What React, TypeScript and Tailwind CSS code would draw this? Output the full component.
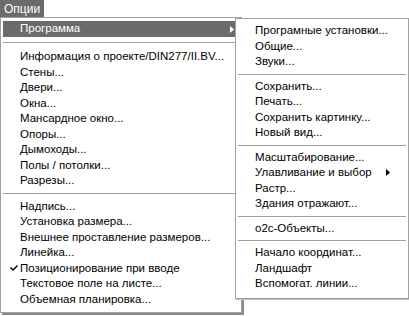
import React from 'react';

type Item = { label: string; sep?: 'a' | 'b' | 'c'; check?: boolean; sub?: boolean };

const mainItems: Item[] = [
  { label: 'sep', sep: 'a' },
  { label: 'Информация о проекте/DIN277/II.BV...' },
  { label: 'Стены...' },
  { label: 'Двери...' },
  { label: 'Окна...' },
  { label: 'Мансардное окно...' },
  { label: 'Опоры...' },
  { label: 'Дымоходы...' },
  { label: 'Полы / потолки...' },
  { label: 'Разрезы...' },
  { label: 'sep', sep: 'b' },
  { label: 'Надпись...' },
  { label: 'Установка размера...' },
  { label: 'Внешнее проставление размеров...' },
  { label: 'Линейка...' },
  { label: 'Позиционирование при вводе', check: true },
  { label: 'Текстовое поле на листе...' },
  { label: 'Объемная планировка...' },
];

const subItems: Item[] = [
  { label: 'Програмные установки...' },
  { label: 'Общие...' },
  { label: 'Звуки...' },
  { label: 'sep', sep: 'c' },
  { label: 'Сохранить...' },
  { label: 'Печать...' },
  { label: 'Сохранить картинку...' },
  { label: 'Новый вид...' },
  { label: 'sep', sep: 'c' },
  { label: 'Масштабирование...' },
  { label: 'Улавливание и выбор', sub: true },
  { label: 'Растр...' },
  { label: 'Здания отражают...' },
  { label: 'sep', sep: 'c' },
  { label: 'o2c-Объекты...' },
  { label: 'sep', sep: 'c' },
  { label: 'Начало координат...' },
  { label: 'Ландшафт' },
  { label: 'Вспомогат. линии...' },
];

function Arrow({ color }: { color: string }) {
  return (
    <svg width="4" height="7" viewBox="0 0 4 7" className="shrink-0">
      <path d="M0 0 L4 3.5 L0 7 Z" fill={color} />
    </svg>
  );
}

function Check() {
  return (
    <svg width="8" height="7" viewBox="0 0 8 7">
      <path d="M0 3 L1 2 L3 4 L7 0 L8 1 L3 6 Z" fill="#000" />
    </svg>
  );
}

function MenuRow({ item }: { item: Item }) {
  if (item.sep === 'a') {
    return (
      <div className="h-[12px] pt-[5px]">
        <div className="h-px w-full bg-[#a0a0a0]" />
      </div>
    );
  }
  if (item.sep) {
    return (
      <div className={(item.sep === 'c' ? 'h-[9px]' : 'h-[10px]') + ' flex items-center'}>
        <div className="h-px w-full bg-[#a0a0a0]" />
      </div>
    );
  }
  return (
    <div className="h-[15.5px] flex items-center">
      <div className="w-[17px] flex items-center justify-center pl-[4px]">
        {item.check && <Check />}
      </div>
      <span className="flex-1 whitespace-nowrap">{item.label}</span>
      {item.sub && (
        <span className="pr-[16px] flex items-center">
          <Arrow color="#000" />
        </span>
      )}
    </div>
  );
}

export default function App() {
  return (
    <div className="relative w-[409px] h-[316px] bg-white text-black text-[11.5px] font-['Liberation_Sans',Arial,sans-serif] overflow-hidden">
      {/* menu bar */}
      <div className="h-[17px] flex">
        <div className="bg-[#6b6b6b] text-white px-[4px] flex items-center text-[12px]">Опции</div>
      </div>

      {/* main dropdown */}
      <div className="w-[242px] border border-[#a0a0a0] shadow-[2px_2px_0_#8a8a8a] px-[2px] pt-[3px] pb-[5px]">
        <div className="h-[16px] bg-[#6b6b6b] text-white flex items-center">
          <span className="pl-[17px] flex-1">Программа</span>
          <span className="pr-[5px] flex items-center">
            <Arrow color="#fff" />
          </span>
        </div>
        {mainItems.map((it, i) => (
          <MenuRow key={i} item={it} />
        ))}
      </div>

      {/* submenu */}
      <div className="absolute left-[235px] top-[18px] w-[174px] bg-white border border-[#a0a0a0] shadow-[1px_1px_0_#c0c0c0] px-[2px] pt-[4px] pb-[6px]">
        {subItems.map((it, i) => (
          <MenuRow key={i} item={it} />
        ))}
      </div>
    </div>
  );
}
